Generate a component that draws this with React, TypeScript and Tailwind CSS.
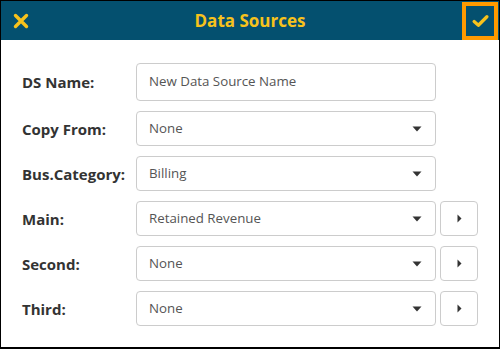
import React from "react";

const font = { fontFamily: '"Open Sans", "Noto Sans", sans-serif' };

function CaretDown() {
  return (
    <svg width="10" height="6" viewBox="0 0 10 6" className="shrink-0">
      <path d="M0.5 0.5 L9.5 0.5 L5 5.5 Z" fill="#333" />
    </svg>
  );
}

function CaretRight() {
  return (
    <svg width="5" height="9" viewBox="0 0 5 9">
      <path d="M0.5 0.5 L4.5 4.5 L0.5 8.5 Z" fill="#333" />
    </svg>
  );
}

function Row({
  label,
  value,
  select,
  arrow,
  tall,
}: {
  label: string;
  value: string;
  select?: boolean;
  arrow?: boolean;
  tall?: boolean;
}) {
  return (
    <div className="flex items-center">
      <div className="w-[114px] text-[15px] font-bold text-[#333] pt-[1px]">{label}</div>
      <div
        className={`w-[300px] ${tall ? "h-[38px]" : "h-[35px]"} border border-[#ccc] rounded-[4px] flex items-center pl-[12px] pr-[13px] justify-between bg-white`}
      >
        <span className="text-[13.3px] text-[#555]">{value}</span>
        {select && <CaretDown />}
      </div>
      {arrow && (
        <div className="ml-[4px] w-[38px] h-[35px] border border-[#ccc] rounded-[4px] flex items-center justify-center bg-white">
          <CaretRight />
        </div>
      )}
    </div>
  );
}

export default function App() {
  return (
    <div
      style={font}
      className="w-[500px] h-[349px] border border-black border-b-2 bg-white flex flex-col overflow-hidden"
    >
      <div className="h-[39px] bg-[#04506f] flex items-center justify-between shrink-0 relative">
        <div className="pl-[12px] flex items-center">
          <svg width="16" height="16" viewBox="0 0 16 16">
            <path d="M2.5 2.5 L13.5 13.5 M13.5 2.5 L2.5 13.5" stroke="#f7c21c" strokeWidth="3.4" strokeLinecap="round" />
          </svg>
        </div>
        <div className="absolute inset-0 flex items-center justify-center pointer-events-none">
          <span className="text-[17px] font-bold text-[#f7c21c]">Data Sources</span>
        </div>
        <div className="w-[36px] h-[38px] border-[4px] border-[#ff9a00] flex items-center justify-center mr-[1px]">
          <svg width="17" height="14" viewBox="0 0 16 13">
            <path d="M2 7 L6 10.5 L14 2.5" stroke="#f7c21c" strokeWidth="3" fill="none" strokeLinecap="round" strokeLinejoin="round" />
          </svg>
        </div>
      </div>
      <div className="flex flex-col gap-[10px] pl-[21px] pt-[23px]">
        <Row label="DS Name:" value="New Data Source Name" tall />
        <Row label="Copy From:" value="None" select />
        <Row label="Bus.Category:" value="Billing" select />
        <Row label="Main:" value="Retained Revenue" select arrow />
        <Row label="Second:" value="None" select arrow />
        <Row label="Third:" value="None" select arrow />
      </div>
    </div>
  );
}
